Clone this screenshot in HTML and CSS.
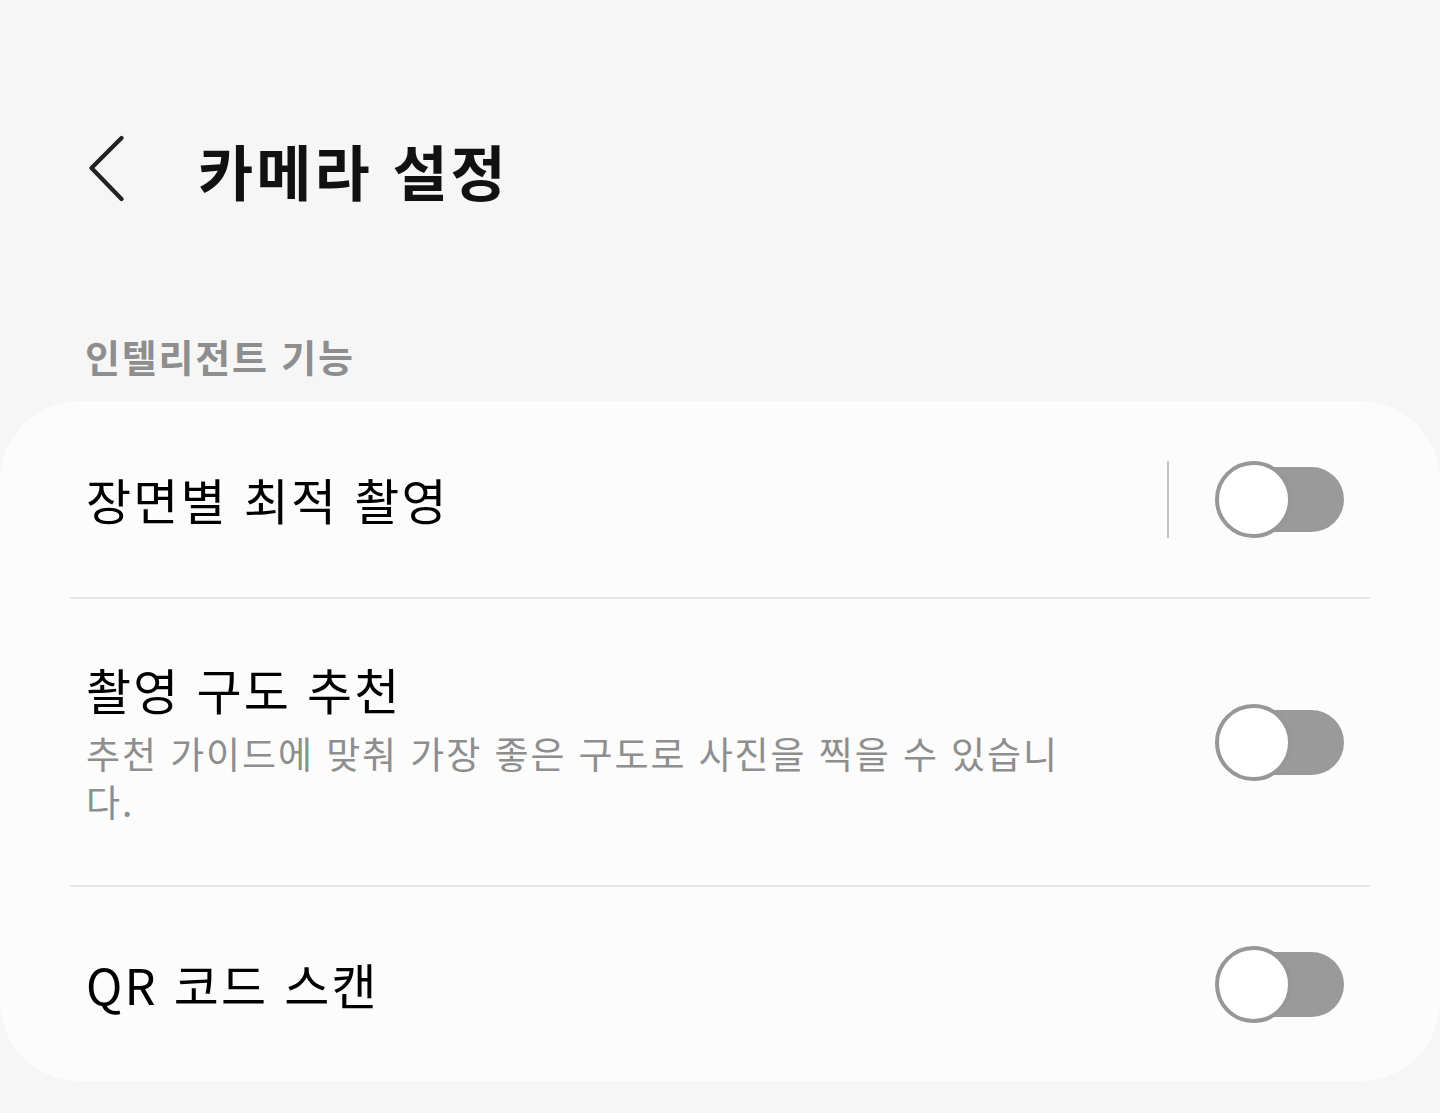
FILE: index.html
```html
<!DOCTYPE html>
<html lang="ko">
<head>
<meta charset="utf-8">
<title>카메라 설정</title>
<link rel="stylesheet" href="styles.css">
</head>
<body>
<div class="screen">
  <header class="appbar">
    <button class="back" aria-label="뒤로">
      <svg width="40" height="70" viewBox="0 0 40 70">
        <polyline points="32.5,30 2.5,60 32.5,91" transform="translate(0,-27)" fill="none" stroke="#222" stroke-width="4.2" stroke-linecap="round" stroke-linejoin="round"/>
      </svg>
    </button>
    <h1 class="title">카메라 설정</h1>
  </header>

  <div class="section-label">인텔리전트 기능</div>

  <div class="card">
    <div class="row row-first">
      <div class="text">
        <div class="row-title">장면별 최적 촬영</div>
      </div>
      <div class="vdiv"></div>
      <div class="switch"><span class="track"></span><span class="thumb"></span></div>
    </div>
    <div class="sep"></div>
    <div class="row row-mid">
      <div class="text">
        <div class="row-title">촬영 구도 추천</div>
        <div class="row-sub">추천 가이드에 맞춰 가장 좋은 구도로 사진을 찍을 수 있습니다.</div>
      </div>
      <div class="switch"><span class="track"></span><span class="thumb"></span></div>
    </div>
    <div class="sep"></div>
    <div class="row row-last">
      <div class="text">
        <div class="row-title">QR 코드 스캔</div>
      </div>
      <div class="switch"><span class="track"></span><span class="thumb"></span></div>
    </div>
  </div>
</div>
</body>
</html>
```

FILE: styles.css
```css
* { box-sizing: border-box; }
html, body {
  margin: 0;
  padding: 0;
  background: #f6f6f6;
}
body {
  font-family: "Noto Sans CJK KR", "Noto Sans", sans-serif;
  color: #000;
  width: 1440px;
  height: 1113px;
  overflow: hidden;
}
.screen {
  display: flex;
  flex-direction: column;
}
.appbar {
  display: flex;
  align-items: center;
  height: 120px;
  margin-top: 110px;
  padding-left: 89px;
}
.back {
  border: 0;
  background: none;
  padding: 0;
  width: 40px;
  height: 70px;
  display: flex;
  align-items: center;
  justify-content: center;
  margin-right: 69px;
}
.back svg { display: block; }
.title {
  margin: 0;
  font-size: 60px;
  font-weight: 700;
  line-height: 1;
  color: #111;
  letter-spacing: 3px;
}
.section-label {
  margin-top: 102px;
  padding-left: 85px;
  font-size: 38px;
  line-height: 48px;
  font-weight: 600;
  color: #8e8e8e;
  letter-spacing: 1.8px;
}
.card {
  margin-top: 21px;
  background: #fcfcfc;
  border-radius: 80px;
  height: 680px;
  display: flex;
  flex-direction: column;
}
.row {
  display: flex;
  align-items: center;
  padding: 0 96px 0 86px;
}
.row-first { height: 196px; }
.row-mid { height: 286px; }
.row-last { height: 194px; }
.text {
  flex: 1;
  min-width: 0;
}
.row-mid .text {
  flex: 0 0 1000px;
  margin-right: auto;
}
.row-title {
  font-size: 49px;
  line-height: 60px;
  font-weight: 400;
  color: #000;
  letter-spacing: 2.2px;
}
.row-sub {
  margin-top: 10px;
  font-size: 37px;
  line-height: 48px;
  color: #8e8e8e;
  letter-spacing: 1.9px;
}
.vdiv {
  width: 2px;
  height: 77px;
  background: #c4c4c4;
  margin-right: 46px;
}
.sep {
  height: 2px;
  background: #e7e7e7;
  margin: 0 70px;
}
.switch {
  position: relative;
  width: 129px;
  height: 77px;
  flex: 0 0 auto;
}
.track {
  position: absolute;
  left: 20px;
  right: 0;
  top: 6px;
  height: 65px;
  border-radius: 33px;
  background: #9a9a9a;
}
.thumb {
  position: absolute;
  left: 0;
  top: 0;
  width: 77px;
  height: 77px;
  border-radius: 50%;
  background: #fff;
  border: 4px solid #979797;
}
```
